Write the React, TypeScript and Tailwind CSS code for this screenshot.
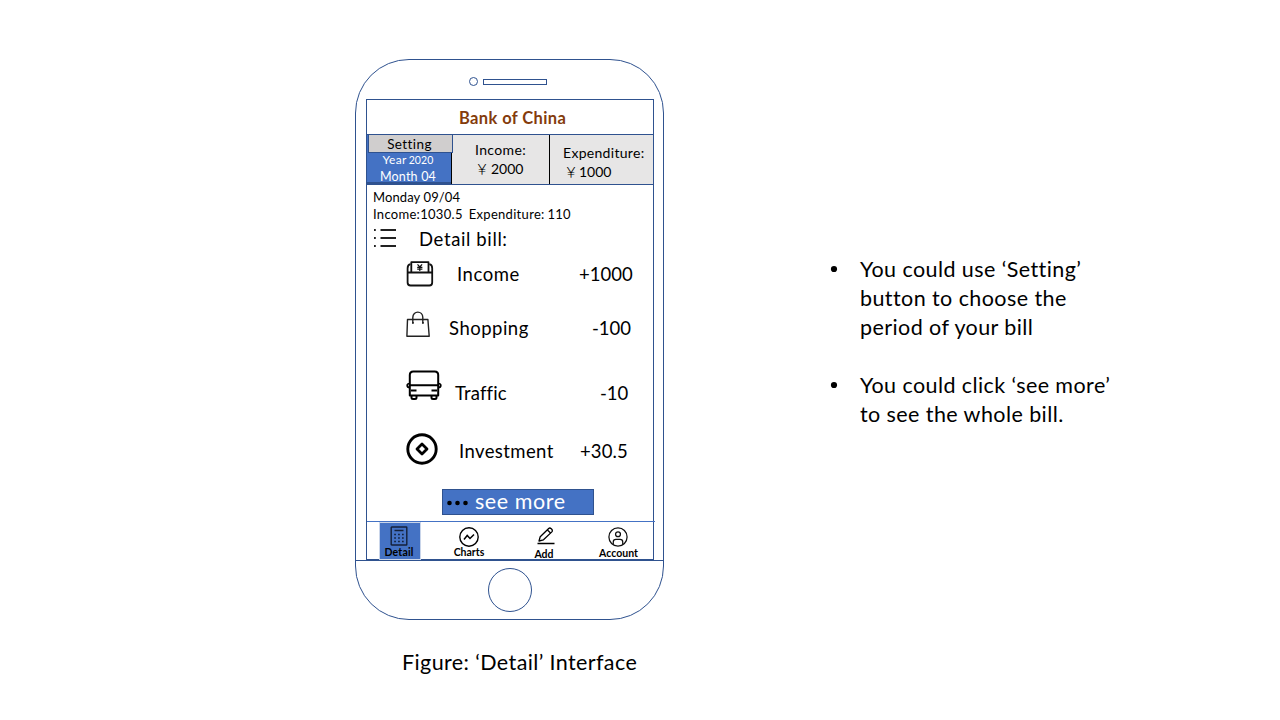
import React from "react";

const yen = "font-['Noto_Sans_CJK_SC',sans-serif] font-light";

function ListIcon() {
  return (
    <svg className="block h-[20px] w-[24px]" viewBox="0 0 24 20" fill="none" stroke="#222" strokeWidth="1.8">
      <path d="M7.500 2H23M7.500 10H23M7.500 18H23" />
      <path d="M1 2h1.800M1 10h1.800M1 18h1.800" />
    </svg>
  );
}

function IncomeIcon() {
  return (
    <svg className="block h-[26px] w-[28px]" viewBox="0 0 28 26" fill="none" stroke="#111" strokeWidth="1.8" strokeLinejoin="round">
      <path d="M4.5 3.2C2.4 3.5 1.6 5 1.6 7.2V21.5Q1.6 24.5 4.6 24.5H23.4Q26.2 24.5 26.2 21.5V7.2C26.2 5 25.400 3.500 23.300 3.200" />
      <path d="M1.600 11.500H26.200M5.300 11.500V1.200H22.500V11.500" />
      <path d="M11.500 3.400L13.800 6L16.100 3.400M11.200 6.300H16.400M11.200 8.200H16.400M13.800 6V10" strokeWidth="1.200" />
    </svg>
  );
}

function BagIcon() {
  return (
    <svg className="block h-[28px] w-[26px]" viewBox="0 0 26 28" fill="none" stroke="#222" strokeWidth="1.4" strokeLinejoin="round">
      <path d="M1.500 8.500H21.900L23.200 25.300H0.900Z" />
      <path d="M6.800 12.300V6.500C6.800 -0.700 16.800 -0.700 16.800 6.500V12.300" />
      <path d="M6 11.800h1.800M16 11.800h1.800" strokeWidth="1.800" />
    </svg>
  );
}

function BusIcon() {
  return (
    <svg className="block h-[31px] w-[36px]" viewBox="0 0 36 31" fill="none" stroke="#000" strokeWidth="2" strokeLinejoin="round">
      <path d="M3.800 25.500V5Q3.800 1.500 7.300 1.500H28.700Q32.200 1.500 32.200 5V25.500Z" />
      <path d="M3.800 15.300H32.200M5 20.500H10.500M25.500 20.500H31" />
      <path d="M3.800 13.500Q1.200 13.500 1.200 15.500T3.800 17.500M32.200 13.500Q34.800 13.500 34.800 15.500T32.200 17.500" strokeWidth="1.700" />
      <path d="M5.500 26V27.500Q5.500 29 7 29H9Q10.500 29 10.500 27.500V26M25.500 26V27.500Q25.500 29 27 29H29Q30.500 29 30.500 27.500V26" />
    </svg>
  );
}

function CoinIcon() {
  return (
    <svg className="block h-[32px] w-[32px]" viewBox="0 0 32 32" fill="none" stroke="#000" strokeLinejoin="round">
      <circle cx="16" cy="16" r="14.200" strokeWidth="2.900" />
      <path d="M16 11L21 16L16 21L11 16Z" strokeWidth="2.800" />
    </svg>
  );
}

function CalculatorIcon() {
  return (
    <svg className="block h-[20px] w-[18px]" viewBox="0 0 18 20" fill="none" stroke="#14213a" strokeWidth="1.400">
      <rect x="1.200" y="1" width="15.600" height="18" rx="0.500" />
      <path d="M4.500 4.500H13.500" />
      <path d="M4.200 8.500H14M4.200 12H14M4.200 15.500H14" strokeWidth="1.600" strokeDasharray="1.700 2.200" />
    </svg>
  );
}

function ChartIcon() {
  return (
    <svg className="block h-[20px] w-[20px]" viewBox="0 0 20 20" fill="none" stroke="#000" strokeWidth="1.400">
      <circle cx="10" cy="10" r="9.200" />
      <path d="M5 12.500L8.200 8.500L11 11.500L15 7.500" strokeWidth="1.500" />
    </svg>
  );
}

function PenIcon() {
  return (
    <svg className="block h-[18px] w-[18px]" viewBox="0 0 18 18" fill="none" stroke="#000" strokeWidth="1.300" strokeLinejoin="round">
      <path d="M2 14L3.200 9.800L11.700 1.500Q12.800 0.500 14.300 1.700T15.100 4.600L6.500 12.800Z" />
      <path d="M10.400 3L13.600 5.900" />
      <path d="M0.500 16.500H17.500" strokeWidth="1.400" />
    </svg>
  );
}

function AccountIcon() {
  return (
    <svg className="block h-[22px] w-[22px]" viewBox="0 0 22 22" fill="none" stroke="#111" strokeWidth="1.400">
      <circle cx="11" cy="11" r="10" />
      <circle cx="11" cy="8" r="2.700" />
      <path d="M5.800 19.300V16.500Q5.800 13.600 8.700 13.600H13.300Q16.200 13.600 16.200 16.500V19.300" />
    </svg>
  );
}

function Phone() {
  return (
    <div className="flex h-[561px] w-[309px] flex-col overflow-hidden rounded-[54px] border border-[#2f528f]">
      <div className="flex h-[39px] shrink-0 items-center pt-[4px] pl-[113px]">
        <div className="h-[9px] w-[9px] rounded-full border border-[#2f528f]" />
        <div className="ml-[5px] h-[6px] w-[64px] border border-[#2f528f]" />
      </div>

      <div className="ml-[10px] flex h-[461px] w-[288px] shrink-0 flex-col border border-[#2f528f] text-black">
        <header className="h-[34px] shrink-0 pt-[8px] pl-[92px] text-[16.5px] leading-[20px] font-bold tracking-[0.38px] whitespace-nowrap text-[#843c0c]">
          Bank of China
        </header>

        <section className="flex h-[51px] shrink-0 border-y border-[#2f528f] bg-[#e7e6e6]">
          <div className="flex w-[85px] shrink-0 flex-col border-r border-black bg-[#4472c4] text-white">
            <button className="-mt-px ml-px h-[19px] w-[85px] shrink-0 border border-[#2f528f] bg-[#d0cece] pr-[2px] text-center text-[13.5px] leading-[18px] tracking-[0.4px] text-black">
              Setting
            </button>
            <div className="flex h-[14px] items-baseline justify-center pr-[2px] text-[12px] leading-[14px] tracking-[0.3px] whitespace-nowrap">
              Year<span className="ml-[2px] text-[10.5px] tracking-[0.1px]">2020</span>
            </div>
            <div className="h-[17px] border-b-2 border-[#2f528f] pt-px pr-[2px] text-center text-[12.5px] leading-[17px] tracking-[0.2px]">
              Month 04
            </div>
          </div>
          <div className="w-[98px] shrink-0 border-r border-black pt-[5px] pl-[23px] text-[14px] leading-[19px] whitespace-nowrap">
            <div className="tracking-[0.35px]">Income:</div>
            <div className="flex">
              <span className={yen}>￥</span>
              <span className="ml-[2px]">2000</span>
            </div>
          </div>
          <div className="pt-[8px] pl-[13px] text-[14px] leading-[19px] whitespace-nowrap">
            <div className="tracking-[0.3px]">Expenditure:</div>
            <div className="flex pl-px">
              <span className={yen}>￥</span>
              <span className="ml-px">1000</span>
            </div>
          </div>
        </section>

        <section className="h-[336px] shrink-0">
          <div className="pt-[4px] pl-[6px] text-[13px] leading-[17px] whitespace-nowrap">
            <div className="tracking-[0.1px]">Monday 09/04</div>
            <div className="flex tracking-[0.3px]">
              <span>Income:1030.5</span>
              <span className="ml-[6px]">Expenditure:</span>
              <span className="ml-[3px] tracking-[0.2px]">110</span>
            </div>
          </div>
          <div className="flex h-[27px] pt-[5px] pl-[6px]">
            <ListIcon />
            <h2 className="ml-[22px] text-[18.5px] leading-[23px] tracking-[0.62px] whitespace-nowrap">Detail bill:</h2>
          </div>
          <div className="grid grid-cols-[51px_122px_1fr] pl-[39px] text-[18.5px] leading-[26px] whitespace-nowrap">
            <div className="flex h-[54px] pt-[11px]"><IncomeIcon /></div>
            <div className="pt-[11px] tracking-[0.55px]">Income</div>
            <div className="pt-[11px] tracking-[0.05px]">+1000</div>

            <div className="flex h-[54px] pt-[7px]"><BagIcon /></div>
            <div className="-ml-[8px] pt-[11px] tracking-[0.5px]">Shopping</div>
            <div className="pt-[11px] pl-[13px]">-100</div>

            <div className="flex h-[62px] pt-[12px]"><BusIcon /></div>
            <div className="-ml-[2px] pt-[22px] tracking-[0.15px]">Traffic</div>
            <div className="pt-[22px] pl-[21px]">-10</div>

            <div className="flex h-[69px] pt-[13px]"><CoinIcon /></div>
            <div className="pt-[18px] pl-[2px] tracking-[0.4px]">Investment</div>
            <div className="pt-[18px] pl-px tracking-[0.1px]">+30.5</div>
          </div>
          <button className="ml-[75px] flex h-[26px] w-[152px] items-center border border-[#2f528f] bg-[#4472c4] pl-[3px] text-[21.5px] leading-[24px] tracking-[0.55px] whitespace-nowrap text-white">
            <svg className="mt-[2px] mr-[6px] h-[6px] w-[23px]" viewBox="0 0 23 6" fill="#000">
              <circle cx="3.500" cy="3" r="2.300" />
              <circle cx="11.500" cy="3" r="2.300" />
              <circle cx="19.500" cy="3" r="2.300" />
            </svg>
            <span className="-mt-[2px]">see more</span>
          </button>
        </section>

        <nav className="flex h-[38px] w-[288px] shrink-0 border-t border-[#4472c4] text-[10.5px] leading-[12px] font-bold whitespace-nowrap">
          <div className="ml-[12px] flex h-[38px] w-[42px] flex-col items-center border border-[#c9d5ea] bg-[#4472c4] pt-[3px] pr-[2px]">
            <CalculatorIcon />
            <span className="tracking-[0.2px]">Detail</span>
          </div>
          <div className="ml-[28px] flex w-[40px] flex-col items-center pt-[5px]">
            <ChartIcon />
            <span className="-mt-px">Charts</span>
          </div>
          <div className="ml-[34px] flex w-[42px] flex-col items-center pt-[5px]">
            <div className="ml-[3px]"><PenIcon /></div>
            <span className="mt-[3px]">Add</span>
          </div>
          <div className="ml-[33px] flex w-[40px] flex-col items-center pt-[5px]">
            <AccountIcon />
            <span className="ml-px">Account</span>
          </div>
        </nav>
      </div>

      <div className="flex grow justify-center border-t border-[#2f528f] pt-[7px]">
        <div className="h-[44px] w-[44px] rounded-full border border-[#2f528f]" />
      </div>
    </div>
  );
}

export default function App() {
  return (
    <main className="flex h-[720px] w-[1280px] overflow-hidden bg-white pt-[59px] pl-[355px] font-['Lato',sans-serif] text-black">
      <figure className="w-[309px] shrink-0">
        <Phone />
        <figcaption className="pt-[28px] pl-[47px] text-[21.5px] leading-[28px] tracking-[0.4px] whitespace-nowrap">
          Figure: ‘Detail’ Interface
        </figcaption>
      </figure>
      <ul className="ml-[166px] flex flex-col gap-[29.5px] pt-[196px] text-[21.5px] leading-[28.8px] tracking-[0.42px] whitespace-nowrap">
        <li className="flex">
          <svg className="mt-[10px] mr-[22px] h-[8px] w-[8px]" viewBox="0 0 8 8" fill="#000">
            <circle cx="4" cy="4" r="3.100" />
          </svg>
          <p>You could use ‘Setting’<br />button to choose the<br />period of your bill</p>
        </li>
        <li className="flex">
          <svg className="mt-[10px] mr-[22px] h-[8px] w-[8px]" viewBox="0 0 8 8" fill="#000">
            <circle cx="4" cy="4" r="3.100" />
          </svg>
          <p>You could click ‘see more’<br />to see the whole bill.</p>
        </li>
      </ul>
    </main>
  );
}
